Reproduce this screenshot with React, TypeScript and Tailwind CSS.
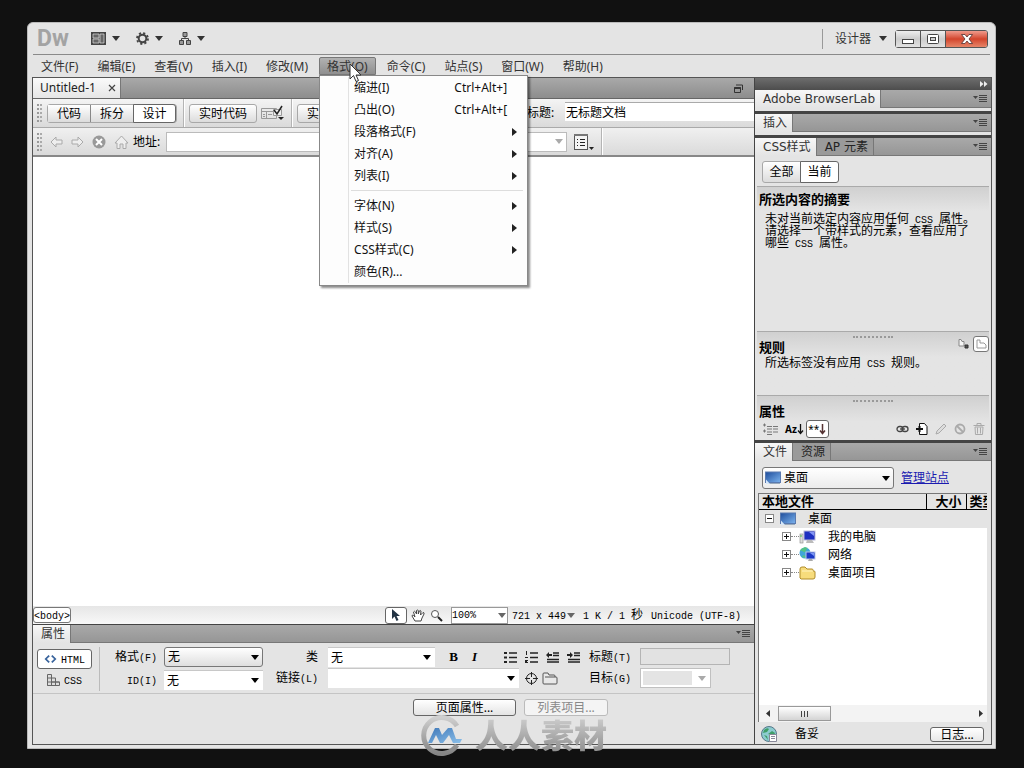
import { clsx } from "clsx";
import type { ReactNode } from "react";

const menus = [
  "文件(F)",
  "编辑(E)",
  "查看(V)",
  "插入(I)",
  "修改(M)",
  "格式(O)",
  "命令(C)",
  "站点(S)",
  "窗口(W)",
  "帮助(H)",
];

interface MenuEntry {
  label: string;
  shortcut?: string;
  submenu?: boolean;
}

const formatMenu: MenuEntry[][] = [
  [
    { label: "缩进(I)", shortcut: "Ctrl+Alt+]" },
    { label: "凸出(O)", shortcut: "Ctrl+Alt+[" },
    { label: "段落格式(F)", submenu: true },
    { label: "对齐(A)", submenu: true },
    { label: "列表(I)", submenu: true },
  ],
  [
    { label: "字体(N)", submenu: true },
    { label: "样式(S)", submenu: true },
    { label: "CSS样式(C)", submenu: true },
    { label: "颜色(R)..." },
  ],
];

const raised =
  "border border-[#a8a8a8] bg-linear-to-b from-white to-[#dcdcdc] text-black";

// Latin runs are set in a narrow mono face, the rest stays in the CJK font.
function Song({ children }: { children: string }) {
  return (
    <span className="whitespace-pre">
      {children
        .split(/([\x20-\x7e]+)/)
        .filter(Boolean)
        .map((part, i) =>
          /^[\x20-\x7e]/.test(part) ? (
            <span
              key={i}
              className="font-['Liberation_Mono','Noto_Sans_CJK_SC',monospace] text-[10px] leading-[0px]"
            >
              {part}
            </span>
          ) : (
            part
          ),
        )}
    </span>
  );
}

function Caret({ className }: { className?: string }) {
  return (
    <svg
      viewBox="0 0 8 5"
      className={clsx("pointer-events-none h-[5px] w-2 shrink-0 fill-current", className)}
      aria-hidden
    >
      <path d="M0 0h8L4 5z" />
    </svg>
  );
}

function Grip() {
  return (
    <span className="flex shrink-0 gap-px" aria-hidden>
      <span className="h-[18px] border-l-2 border-dotted border-[#999]" />
      <span className="h-[18px] border-l-2 border-dotted border-[#aaa]" />
    </span>
  );
}

function Separator() {
  return (
    <span
      className="h-full w-0.5 shrink-0 border-l border-[#b4b4b4] bg-white"
      aria-hidden
    />
  );
}

function Icon({
  label,
  className,
  children,
}: {
  label: string;
  className?: string;
  children: ReactNode;
}) {
  return (
    <button
      type="button"
      aria-label={label}
      className={clsx("flex shrink-0 items-center justify-center", className)}
    >
      {children}
    </button>
  );
}

function PanelBar({
  tabs,
  className,
}: {
  tabs: string[];
  className?: string;
}) {
  return (
    <div className={clsx("flex h-[18px] shrink-0 bg-[#e4e4e4]", className)}>
      {tabs.map((tab, i) => (
        <button
          key={tab}
          type="button"
          className={clsx(
            "h-[18px] border-r pr-[5px] pl-2 font-['DejaVu_Sans','Noto_Sans_CJK_SC',sans-serif] leading-[18px] whitespace-nowrap",
            i === 0
              ? "border-[#777] bg-linear-to-b from-[#f7f7f7] to-[#e4e4e4] text-[#333]"
              : "border-b border-[#777] bg-[#9a9a9a] text-[#222]",
          )}
        >
          {tab}
        </button>
      ))}
      <div className="flex flex-1 items-center justify-end border-b border-[#777] bg-linear-to-b from-[#a9a9a9] to-[#969696] pr-1">
        <Icon label="面板菜单">
          <svg width="14" height="9" viewBox="0 0 14 9" aria-hidden>
            <path d="M0 2h5L2.500 5z" fill="#444" />
            <path
              d="M6 1.500h8M6 3.500h8M6 5.500h8M6 7.500h8"
              stroke="#444"
              strokeWidth="1"
            />
          </svg>
        </Icon>
      </div>
    </div>
  );
}

function DesktopIcon() {
  return (
    <svg width="16" height="14" viewBox="0 0 16 14" className="shrink-0" aria-hidden>
      <defs>
        <linearGradient id="desk" x1="0" y1="0" x2="1" y2="1">
          <stop offset="0" stopColor="#1e4d9c" />
          <stop offset="1" stopColor="#7db4ee" />
        </linearGradient>
      </defs>
      <rect x="0.500" y="1" width="15" height="10.500" fill="url(#desk)" stroke="#5a7ab0" />
      <path d="M1 12.500h14" stroke="#9ab" />
      <path d="M1 8.500l4 4.500H1z" fill="#d6e8fa" />
    </svg>
  );
}

function ComputerIcon() {
  return (
    <svg width="17" height="14" viewBox="0 0 17 14" className="shrink-0" aria-hidden>
      <rect x="1" y="4" width="3" height="9" fill="#ddd" stroke="#888" strokeWidth=".6" />
      <path d="M2 5v2" stroke="#4b4" />
      <rect x="5" y="1" width="11" height="9" fill="#1d2fc0" stroke="#b8b8d8" />
      <path d="M10 2h5v4z" fill="#8394f4" />
      <path d="M8 10h5l2 3H7z" fill="#bbb" />
    </svg>
  );
}

function NetworkIcon() {
  return (
    <svg width="17" height="15" viewBox="0 0 17 15" className="shrink-0" aria-hidden>
      <circle cx="6" cy="6" r="5.500" fill="#3fa6d8" />
      <path d="M1 4c3-1 3 2 5 1s1-4 3-4L6 0 2 2zM3 10c1-3 4-2 4 1z" fill="#54c285" />
      <rect x="7" y="5" width="9" height="7" fill="#1b39c6" stroke="#b9c6e6" />
      <path d="M11 6h4v3z" fill="#7d98f5" />
      <path d="M10 12h3l1 2H9z" fill="#aaa" />
    </svg>
  );
}

function FolderIcon() {
  return (
    <svg width="17" height="14" viewBox="0 0 17 14" className="shrink-0" aria-hidden>
      <path
        d="M1 12V3q0-2 2-2h3l2 2h5q1 0 1 1v1h1q1 0 1 1v5q0 2-2 2H2z"
        fill="#f7dc7c"
        stroke="#b08c2a"
      />
      <path d="M3 5h11" stroke="#fff3c0" />
    </svg>
  );
}

function TitleBar() {
  return (
    <header className="mx-[5px] flex h-[32px] shrink-0 items-center border-b border-[#8a8a8a] text-[#333]">
      <span className="w-[52px] pl-1 font-['Roboto',sans-serif] text-[23px] leading-[30px] font-bold text-[#a3a3a3]">
        Dw
      </span>
      <div className="flex flex-1 items-center gap-4 pl-1.5">
        <Icon label="布局" className="gap-1.5">
          <svg width="15" height="13" viewBox="0 0 15 13" aria-hidden>
            <path d="M0 0h15v13H0z" fill="#444" />
            <path d="M2 2h6v4H2zM2 7h6v4H2zM9 2h4v9H9z" fill="#666" stroke="#ddd" strokeWidth=".7" />
          </svg>
          <Caret />
        </Icon>
        <Icon label="扩展" className="gap-1.5">
          <svg width="13" height="13" viewBox="0 0 13 13" aria-hidden>
            <circle cx="6.500" cy="6.500" r="3.800" fill="none" stroke="#444" strokeWidth="2" />
            <circle
              cx="6.500"
              cy="6.500"
              r="5.500"
              fill="none"
              stroke="#444"
              strokeWidth="1.800"
              strokeDasharray="2.160 2.160"
            />
          </svg>
          <Caret />
        </Icon>
        <Icon label="站点" className="gap-1.5">
          <svg width="12" height="13" viewBox="0 0 12 13" fill="#999" stroke="#444" aria-hidden>
            <path d="M4 .5h4v4H4zM.5 8.500h4v4h-4zM7.500 8.500h4v4h-4z" />
            <path d="M6 5v2M2.500 8.500V6.500h7v2" fill="none" />
          </svg>
          <Caret />
        </Icon>
      </div>
      <div className="flex items-center gap-2">
        <span className="h-5 border-l border-[#999]" aria-hidden />
        <button type="button" className="flex items-center gap-2 pl-1 leading-5">
          设计器
          <Caret />
        </button>
        <div className="mr-0.5 flex h-[18px] rounded-[3px] border border-[#555]">
          <Icon
            label="最小化"
            className="w-[25px] border-r border-[#555] bg-linear-to-b from-[#eee] via-[#ccc] to-[#e2e2e2]"
          >
            <svg width="12" height="12" viewBox="0 0 12 12" aria-hidden>
              <rect x=".5" y="6.500" width="11" height="4" fill="#fff" stroke="#444" />
            </svg>
          </Icon>
          <Icon
            label="最大化"
            className="w-[25px] border-r border-[#555] bg-linear-to-b from-[#eee] via-[#ccc] to-[#e2e2e2]"
          >
            <svg width="12" height="10" viewBox="0 0 12 10" aria-hidden>
              <rect x=".5" y=".5" width="11" height="9" rx="1" fill="#fff" stroke="#444" />
              <rect x="3.500" y="3.500" width="5" height="3" fill="#ccc" stroke="#444" />
            </svg>
          </Icon>
          <Icon
            label="关闭"
            className="w-[41px] rounded-r-[2px] bg-linear-to-b from-[#ef9a8c] via-[#d2442c] to-[#e68468]"
          >
            <svg width="12" height="10" viewBox="0 0 12 10" aria-hidden>
              <path
                d="M.5.500h3.500l2 2.500L8 .500h3.500L8 5l3.500 4.500H8L6 7 4 9.500H.500L4 5z"
                fill="#fff"
                stroke="#503030"
                strokeWidth=".8"
              />
            </svg>
          </Icon>
        </div>
      </div>
    </header>
  );
}

function FormatMenu() {
  return (
    <div
      role="menu"
      className="absolute top-full left-0 z-20 w-[209px] border border-[#888] bg-[#fdfdfd] pt-px pb-0.5 text-[#111] shadow-[2px_2px_2px_rgba(0,0,0,0.45)]"
    >
      {formatMenu.map((group, i) => (
        <div
          key={i}
          className={clsx("ml-7 border-l border-[#e2e2e2]", i > 0 && "pt-[3px]")}
        >
          {i > 0 && <hr className="mr-1 mb-1 ml-0.5 border-[#ddd]" />}
          {group.map((entry) => (
            <button
              key={entry.label}
              type="button"
              role="menuitem"
              className="flex h-[22px] w-full items-center pr-2.5 pl-[5px] text-left"
            >
              <span className="flex-1">{entry.label}</span>
              {entry.shortcut && <span className="pr-2.5">{entry.shortcut}</span>}
              {entry.submenu && (
                <svg width="5" height="8" viewBox="0 0 5 8" aria-hidden>
                  <path d="M0 0v8l5-4z" fill="#222" />
                </svg>
              )}
            </button>
          ))}
        </div>
      ))}
    </div>
  );
}

function MenuBar() {
  return (
    <nav className="mx-[5px] flex h-[22px] shrink-0 items-start gap-[3px] pt-0.5 text-[#333]">
      {menus.map((label) => {
        const open = label === "格式(O)";
        return (
          <div key={label} className="relative">
            <button
              type="button"
              className={clsx(
                "h-[18px] border px-[7px] leading-[17px] whitespace-nowrap",
                open
                  ? "rounded-t-[2px] border-[#777] bg-linear-to-b from-[#b2b2b2] to-[#8f8f8f]"
                  : "border-transparent",
              )}
            >
              {label}
            </button>
            {open && (
              <>
                <FormatMenu />
                <svg
                  width="14"
                  height="20"
                  viewBox="0 0 14 20"
                  className="absolute top-1.5 left-[30px] z-30"
                  aria-hidden
                >
                  <path
                    d="M1 1v15l3.500-3.500L7 18.500l2.500-1L7 12h5z"
                    fill="#fff"
                    stroke="#333"
                  />
                </svg>
              </>
            )}
          </div>
        );
      })}
    </nav>
  );
}

function DocumentArea() {
  return (
    <section className="flex min-h-0 flex-1 flex-col">
      <div className="flex h-[21px] shrink-0 items-stretch border-b border-[#666] bg-linear-to-b from-[#a9a9a9] to-[#8d8d8d]">
        <div className="flex items-center gap-3 border-r border-[#777] bg-linear-to-b from-[#fafafa] to-[#e6e6e6] pr-1 pl-[7px]">
          <span className="text-[#222]">Untitled-1</span>
          <Icon label="关闭文档">
            <svg width="8" height="8" viewBox="0 0 8 8" aria-hidden>
              <path d="M1 1l6 6M7 1L1 7" stroke="#444" strokeWidth="1.200" />
            </svg>
          </Icon>
        </div>
        <div className="flex flex-1 items-center justify-end pr-[11px]">
          <Icon label="还原">
            <svg width="9" height="9" viewBox="0 0 9 9" fill="none" stroke="#333" aria-hidden>
              <path d="M2 1h6.500v5M.5 3.500h6v5h-6z" />
              <path d="M.5 4h6" strokeWidth="2" />
            </svg>
          </Icon>
        </div>
      </div>

      <div className="flex h-[29px] shrink-0 items-center border-b border-[#aaa] bg-linear-to-b from-[#f4f4f4] to-[#dadada] pl-1 text-black">
        <Grip />
        <div className="ml-[5px] flex h-[19px] rounded-[3px] border border-[#a8a8a8] leading-[17px]">
          <button
            type="button"
            className="w-[43px] border-r border-[#888] bg-linear-to-b from-white to-[#dcdcdc]"
          >
            代码
          </button>
          <button type="button" className="w-[42px] bg-linear-to-b from-white to-[#dcdcdc]">
            拆分
          </button>
          <button
            type="button"
            className="-my-px w-[43px] rounded-r-[3px] border border-[#666] bg-white"
          >
            设计
          </button>
        </div>
        <span className="ml-1.5 flex h-full">
          <Separator />
        </span>
        <button type="button" className={clsx(raised, "ml-1 h-[19px] w-[68px] rounded-[3px] leading-[17px]")}>
          实时代码
        </button>
        <Icon label="检查浏览器兼容性" className="ml-1">
          <svg width="24" height="16" viewBox="0 0 24 16" fill="none" stroke="#666" aria-hidden>
            <path d="M.5 3.500h15v10H.5zM.5 6.500h15M5.500 6.500v7" stroke="#999" />
            <path d="M2 9.500h2M2 11.500h2M7 9.500h4" stroke="#999" />
            <path d="M12.500 4.500h8v6h-8z" fill="#eee" stroke="#999" />
            <path d="M13 5l3 4 5-8" stroke="#222" strokeWidth="1.500" />
            <path d="M17 12h6l-3 3z" fill="#222" stroke="none" />
          </svg>
        </Icon>
        <span className="ml-1.5 flex h-full">
          <Separator />
        </span>
        <button type="button" className={clsx(raised, "ml-1 h-[19px] w-[68px] rounded-[3px] leading-[17px]")}>
          实时视图
        </button>
        <label htmlFor="doc-title" className="ml-[162px] w-[38px] shrink-0">
          标题:
        </label>
        <input
          id="doc-title"
          defaultValue="无标题文档"
          className="mb-1 h-[19px] min-w-0 flex-1 border-t border-[#aaa] bg-white px-px"
        />
      </div>

      <div className="flex h-[29px] shrink-0 items-center border-b-2 border-[#888] bg-linear-to-b from-[#f0f0f0] to-[#dadada] pl-1 text-black">
        <Grip />
        <div className="ml-2 flex items-center gap-2 text-[#aaa]">
          <Icon label="后退">
            <svg width="13" height="12" viewBox="0 0 13 12" fill="#eee" stroke="#aaa" aria-hidden>
              <path d="M1 6l5-5v3h6v4H6v3z" />
            </svg>
          </Icon>
          <Icon label="前进">
            <svg width="13" height="12" viewBox="0 0 13 12" fill="#eee" stroke="#aaa" aria-hidden>
              <path d="M12 6L7 1v3H1v4h6v3z" />
            </svg>
          </Icon>
          <Icon label="停止">
            <svg width="14" height="14" viewBox="0 0 14 14" aria-hidden>
              <circle cx="7" cy="7" r="6.500" fill="#999" />
              <path d="M4 4l6 6M10 4l-6 6" stroke="#fff" strokeWidth="2" />
            </svg>
          </Icon>
          <Icon label="主页">
            <svg width="15" height="14" viewBox="0 0 15 14" fill="#eee" stroke="#aaa" aria-hidden>
              <path d="M1 8l6.500-7L14 8h-2v5.500H9V9H6v4.500H3V8z" />
            </svg>
          </Icon>
        </div>
        <label htmlFor="address" className="ml-1 w-[33px] shrink-0 whitespace-nowrap">
          地址:
        </label>
        <div className="relative flex w-[401px] items-center">
          <input
            id="address"
            className="h-5 w-full border border-[#bbb] bg-white px-1"
          />
          <Caret className="absolute right-1 text-[#aaa]" />
        </div>
        <Icon label="查看选项" className="ml-1.5 items-end">
          <svg width="22" height="18" viewBox="0 0 22 18" aria-hidden>
            <rect x="1.500" y="1.500" width="13" height="15" fill="#f4f4f4" stroke="#555" />
            <path d="M1 2h14" stroke="#777" strokeWidth="2" />
            <path d="M4 6.500h1M4 9.500h1M4 12.500h1M7 6.500h5M7 9.500h5M7 12.500h5" stroke="#222" />
            <path d="M16 14h5l-2.500 3z" fill="#222" />
          </svg>
        </Icon>
        <span className="ml-1.5 flex h-full">
          <Separator />
        </span>
      </div>

      <div className="flex-1 bg-white" />

      <div className="flex h-[18px] shrink-0 items-center bg-linear-to-b from-[#e6e6e6] to-[#f8f8f8] text-black">
        <button
          type="button"
          className="flex h-4 items-center rounded-[3px] border border-[#777] bg-white"
        >
          <Song>{"<body>"}</Song>
        </button>
        <div className="ml-auto flex h-full items-center">
          <Icon label="选取工具" className="h-[17px] w-[22px] rounded-[3px] border border-[#666] bg-white">
            <svg width="9" height="13" viewBox="0 0 9 13" aria-hidden>
              <path d="M1 0v10l2.500-2.500L5.500 12l2-1-2-4H9z" fill="#234" />
            </svg>
          </Icon>
          <Icon label="手形工具" className="ml-1">
            <svg width="14" height="13" viewBox="0 0 14 13" fill="#fff" stroke="#444" aria-hidden>
              <path d="M4 12L1 7q0-1.500 1.500-.5L4 8 2.500 3q1-1.500 2 0L5.500 5V1.500q1-1 1.800 0V5l1-3q1-1 1.700 0L9.500 6 12 3.500q1.500 0 1 1.500L11 9l-1 3z" />
            </svg>
          </Icon>
          <Icon label="缩放工具" className="ml-[5px]">
            <svg width="13" height="13" viewBox="0 0 13 13" fill="#fff" stroke="#555" aria-hidden>
              <circle cx="5" cy="5" r="3.500" />
              <path d="M8 8l4 4" stroke="#222" strokeWidth="2" />
            </svg>
          </Icon>
          <div className="relative ml-2 flex items-center">
            <select
              aria-label="缩放比率"
              className="h-[17px] w-[57px] appearance-none border border-[#999] bg-white font-['Liberation_Mono',monospace] text-[10px]"
            >
              <option>100%</option>
            </select>
            <Caret className="absolute right-0.5 text-[#666]" />
          </div>
          <button type="button" className="ml-1 flex items-center">
            <Song>721 x 449</Song>
            <Caret className="ml-px text-[#666]" />
          </button>
          <span className="ml-2">
            <Song>1 K / 1 秒</Song>
          </span>
          <span className="mr-[13px] ml-2">
            <Song>Unicode (UTF-8)</Song>
          </span>
        </div>
      </div>
    </section>
  );
}

function Select({
  id,
  value,
  className,
  boxed,
}: {
  id: string;
  value?: string;
  className: string;
  boxed?: boolean;
}) {
  return (
    <div className={clsx("relative flex items-center text-black", className)}>
      <select
        id={id}
        className={clsx(
          "h-5 w-full appearance-none pl-[3px]",
          boxed
            ? "rounded-[3px] border border-[#777] bg-linear-to-b from-white to-[#dedede]"
            : "border-t border-[#c8c8c8] bg-white",
        )}
      >
        <option>{value}</option>
      </select>
      <Caret className="absolute right-1" />
    </div>
  );
}

const listIcons = [
  { label: "项目列表", path: "M5 2h8M5 6.500h8M5 11h8", marks: "M0 1h3v2H0zM0 5.500h3v2H0zM0 10h3v2H0z" },
  { label: "编号列表", path: "M5 2h8M5 6.500h8M5 11h8", marks: "M1 0h1v4H1zM0 6h3v1H0zM0 9h3v1H2v1h1v1H0z" },
  { label: "删除内缩区块", path: "M7 2h6M7 4.500h6M1 8.500h12M1 11h12", marks: "M0 4l3-3v2h3v2H3v2z" },
  { label: "内缩区块", path: "M7 2h6M7 4.500h6M1 8.500h12M1 11h12", marks: "M6 4L3 1v2H0v2h3v2z" },
];

function PropertyInspector() {
  return (
    <section className="shrink-0 border-t border-[#444] text-black">
      <PanelBar tabs={["属性"]} />
      <div className="flex h-[51px] items-start border-b border-[#c4c4c4] pt-1">
        <div className="ml-1 flex w-[63px] flex-col border-r border-[#bbb] pt-0.5">
          <button
            type="button"
            className="flex h-5 w-[55px] items-center gap-1 rounded-[3px] border border-[#666] bg-white px-1.5"
          >
            <svg width="15" height="10" viewBox="0 0 15 10" fill="none" stroke="#38639c" strokeWidth="2" aria-hidden>
              <path d="M6 1L2 5l4 4M9 1l4 4-4 4" />
            </svg>
            <Song>HTML</Song>
          </button>
          <button type="button" className="flex h-[22px] items-center gap-1 pl-2.5">
            <svg width="13" height="12" viewBox="0 0 13 12" fill="#ddd" stroke="#666" aria-hidden>
              <path d="M.5.500h4v11h-4zM.5 4h4M.5 8h12v3.500H.5M4.500 4h4v7.500M4.500 8h8" />
            </svg>
            <Song>CSS</Song>
          </button>
        </div>
        <div className="grid w-[163px] grid-cols-[57px_99px] items-center gap-x-[7px] gap-y-[3px] text-right">
          <label htmlFor="format">
            <Song>格式(F)</Song>
          </label>
          <Select id="format" value="无" className="w-full" boxed />
          <label htmlFor="ident">
            <Song>ID(I)</Song>
          </label>
          <Select id="ident" value="无" className="w-full" />
        </div>
        <div className="flex flex-col gap-px">
          <div className="flex items-center">
            <label htmlFor="class" className="w-[55px] text-right">
              类
            </label>
            <Select id="class" value="无" className="ml-2.5 w-[107px]" />
            <button
              type="button"
              className="ml-[13px] w-[11px] font-['Liberation_Serif',serif] text-[13px] leading-5 font-bold"
            >
              B
            </button>
            <button
              type="button"
              className="ml-2.5 w-[11px] font-['Liberation_Serif',serif] text-[13px] leading-5 font-bold italic"
            >
              I
            </button>
            <div className="ml-6 flex gap-2">
              {listIcons.map((icon) => (
                <Icon key={icon.label} label={icon.label}>
                  <svg width="13" height="12" viewBox="0 0 13 12" aria-hidden>
                    <path d={icon.path} stroke="#222" strokeWidth="1.300" />
                    <path d={icon.marks} fill="#222" />
                  </svg>
                </Icon>
              ))}
            </div>
          </div>
          <div className="flex items-center">
            <label htmlFor="link" className="w-[55px] text-right">
              <Song>链接(L)</Song>
            </label>
            <Select id="link" className="ml-2.5 w-[191px]" />
            <Icon label="指向文件" className="ml-1.5">
              <svg width="13" height="13" viewBox="0 0 13 13" fill="none" stroke="#222" aria-hidden>
                <circle cx="6.500" cy="6.500" r="5" />
                <path d="M6.500 0v5M6.500 8v5M0 6.500h5M8 6.500h5" />
              </svg>
            </Icon>
            <Icon label="浏览文件" className="ml-1">
              <svg width="16" height="13" viewBox="0 0 16 13" fill="#e8e8e8" stroke="#555" aria-hidden>
                <path d="M1 11V2q0-1 1-1h4l1 2h5q1 0 1 1v1h1q1 0 1 1v5q0 1-1 1H2q-1 0-1-1zM3 5h10" />
              </svg>
            </Icon>
          </div>
        </div>
        <div className="ml-[9px] grid grid-cols-[43px_90px] items-center gap-x-2 gap-y-[3px] pt-px">
          <label htmlFor="caption">
            <Song>标题(T)</Song>
          </label>
          <input
            id="caption"
            disabled
            className="h-[17px] w-full border border-[#b4b4b4] bg-[#e2e2e2]"
          />
          <label htmlFor="target">
            <Song>目标(G)</Song>
          </label>
          <div className="relative flex w-[71px] items-center border border-[#c0c0c0] bg-white p-0.5 pr-[18px]">
            <select id="target" disabled className="h-[14px] w-full appearance-none bg-[#e4e4e4]">
              <option></option>
            </select>
            <Caret className="absolute right-1 text-[#aaa]" />
          </div>
        </div>
      </div>
      <div className="flex h-[50px] items-start gap-2 pt-[5px] pl-[380px] leading-[15px]">
        <button
          type="button"
          className="h-[17px] w-[103px] rounded-[3px] border border-[#666] bg-linear-to-b from-white to-[#e4e4e4]"
        >
          页面属性...
        </button>
        <button
          type="button"
          disabled
          className="h-[17px] w-[84px] rounded-[3px] border border-[#bbb] bg-[#f4f4f4] text-[#888]"
        >
          列表项目...
        </button>
      </div>
    </section>
  );
}

function SectionGrip() {
  return (
    <span
      className="w-10 self-start justify-self-center border-t-2 border-dotted border-[#999]"
      aria-hidden
    />
  );
}

function CssPanel() {
  return (
    <>
      <PanelBar tabs={["CSS样式", "AP 元素"]} />
      <div className="h-[284px] shrink-0 px-0.5 text-black">
        <div className="flex h-[30px] pt-[5px] pl-[5px] leading-5">
          <button type="button" className={clsx(raised, "h-[22px] w-[39px] rounded-l-[3px]")}>
            全部
          </button>
          <button
            type="button"
            className="-ml-px h-[22px] w-[39px] rounded-r-[3px] border border-[#666] bg-white"
          >
            当前
          </button>
        </div>
        <section className="h-[145px] border-t border-[#aaa]">
          <h2 className="bg-linear-to-b from-[#d0d0d0] to-[#e4e4e4] pl-0.5 text-[13px] leading-[24px] font-bold">
            所选内容的摘要
          </h2>
          <p className="pt-0.5 pl-2 leading-[12px] [&>span]:block">
            <Song>未对当前选定内容应用任何 CSS 属性。</Song>
            <Song>请选择一个带样式的元素，查看应用了</Song>
            <Song>哪些 CSS 属性。</Song>
          </p>
        </section>
        <section className="h-[64px] border-t border-[#aaa] bg-linear-to-b from-[#d0d0d0] to-[#e4e4e4] to-40%">
          <div className="grid h-6 grid-cols-3 pt-1">
            <h2 className="pt-1 pl-0.5 text-[13px] leading-[14px] font-bold">规则</h2>
            <SectionGrip />
            <div className="-mt-1 flex items-center justify-end gap-1">
              <Icon label="显示有关所选属性的信息">
                <svg width="12" height="12" viewBox="0 0 12 12" fill="none" stroke="#888" aria-hidden>
                  <path d="M2 8V1.500h2l1 2h2V8z" fill="#f5f5f5" />
                  <path d="M8 7h3v3H8z" fill="#555" stroke="#333" />
                </svg>
              </Icon>
              <Icon label="显示所选标签的规则层叠" className="h-4 w-4 rounded-[3px] border border-[#777] bg-white">
                <svg width="11" height="10" viewBox="0 0 11 10" fill="none" stroke="#999" aria-hidden>
                  <path d="M1 9V1h3v3h4l2 2v3z" />
                </svg>
              </Icon>
            </div>
          </div>
          <p className="pl-2 leading-[14px]">
            <Song>所选标签没有应用 CSS 规则。</Song>
          </p>
        </section>
        <section className="h-[44px] border-t border-[#aaa] bg-linear-to-b from-[#d0d0d0] to-[#e4e4e4] to-60%">
          <div className="grid h-6 grid-cols-3 pt-1">
            <h2 className="pt-1 pl-0.5 text-[13px] leading-[14px] font-bold">属性</h2>
            <SectionGrip />
          </div>
          <div className="flex h-[18px] items-center pr-1 pl-1.5">
            <Icon label="显示类别视图">
              <svg width="16" height="12" viewBox="0 0 16 12" stroke="#777" aria-hidden>
                <path d="M0 2h3M1.500 .5v3M0 8h3M1.500 6.500v3M4 3.500h5M10 3.500h5M4 6h5M10 6h5M4 9h5M10 9h5M4 11.500h5" />
              </svg>
            </Icon>
            <button
              type="button"
              aria-label="显示列表视图"
              className="ml-1.5 flex items-center text-[10px] leading-3 font-bold"
            >
              Az
              <svg width="7" height="11" viewBox="0 0 7 11" aria-hidden>
                <path d="M3.500 0v9M1 6.500l2.500 3 2.500-3" fill="none" stroke="#111" strokeWidth="1.300" />
              </svg>
            </button>
            <button
              type="button"
              aria-label="只显示设置属性"
              className="ml-0.5 flex h-[18px] w-[23px] items-center justify-center rounded-[3px] border border-[#666] bg-white text-[10px] leading-3"
            >
              **
              <svg width="7" height="11" viewBox="0 0 7 11" aria-hidden>
                <path d="M3.500 0v9M1 6.500l2.500 3 2.500-3" fill="none" stroke="#533" strokeWidth="1.500" />
              </svg>
            </button>
            <div className="ml-auto flex items-center gap-[7px]">
              <Icon label="附加样式表">
                <svg width="13" height="8" viewBox="0 0 13 8" fill="none" stroke="#444" strokeWidth="1.300" aria-hidden>
                  <rect x="1" y="1.500" width="6" height="5" rx="2.500" />
                  <rect x="6" y="1.500" width="6" height="5" rx="2.500" />
                  <path d="M4 4h5" />
                </svg>
              </Icon>
              <Icon label="新建规则">
                <svg width="12" height="12" viewBox="0 0 12 12" fill="#fff" stroke="#111" aria-hidden>
                  <path d="M3.500.5h5l2.500 3v8H3.500z" />
                  <path d="M0 6h7M3.500 3v6" strokeWidth="2" />
                </svg>
              </Icon>
              <Icon label="编辑规则">
                <svg width="12" height="12" viewBox="0 0 12 12" fill="#ddd" stroke="#aaa" aria-hidden>
                  <path d="M1 11l1-3 7-7 2 2-7 7z" />
                </svg>
              </Icon>
              <Icon label="禁用属性">
                <svg width="12" height="12" viewBox="0 0 12 12" fill="none" stroke="#aaa" strokeWidth="1.800" aria-hidden>
                  <circle cx="6" cy="6" r="4.500" />
                  <path d="M3 3l6 6" />
                </svg>
              </Icon>
              <Icon label="删除规则">
                <svg width="12" height="12" viewBox="0 0 12 12" fill="none" stroke="#aaa" aria-hidden>
                  <path d="M.5 2.500h11M4 2V.500h4V2M2 4l.5 7.500h7L10 4zM4.500 4.500v6M7.500 4.500v6" />
                </svg>
              </Icon>
            </div>
          </div>
        </section>
      </div>
    </>
  );
}

function Toggle({ open }: { open?: boolean }) {
  return (
    <svg width="9" height="9" viewBox="0 0 9 9" className="shrink-0" aria-hidden>
      <rect x=".5" y=".5" width="8" height="8" fill="#fff" stroke="#888" />
      <path d={open ? "M2 4.500h5" : "M2 4.500h5M4.500 2v5"} stroke="#111" />
    </svg>
  );
}

const files = [
  { name: "我的电脑", icon: <ComputerIcon /> },
  { name: "网络", icon: <NetworkIcon /> },
  { name: "桌面项目", icon: <FolderIcon /> },
];

function FilesPanel() {
  return (
    <>
      <PanelBar tabs={["文件", "资源"]} />
      <div className="flex min-h-0 flex-1 flex-col px-[3px] text-black">
        <div className="flex h-8 shrink-0 items-center pt-0.5 pl-1">
          <div className="relative flex w-[132px] items-center">
            <select
              aria-label="站点"
              className="h-[22px] w-full appearance-none rounded-[3px] border border-[#777] bg-linear-to-b from-white to-[#ececec] pl-[21px]"
            >
              <option>桌面</option>
            </select>
            <span className="pointer-events-none absolute left-[3px]">
              <DesktopIcon />
            </span>
            <Caret className="absolute right-1" />
          </div>
          <a href="#sites" className="ml-[7px] text-[#1a1ab0] underline">
            管理站点
          </a>
        </div>
        <div className="mr-px flex min-h-0 flex-1 flex-col overflow-hidden border-t border-l border-[#777] bg-white">
          <table className="w-[259px] table-fixed border-collapse">
            <thead className="bg-[#e4e4e4]">
              <tr className="h-[15px] border-b border-black text-left text-[13px] leading-[14px]">
                <th className="w-[167px] border-r border-black pl-[3px]">本地文件</th>
                <th className="w-10 border-r border-black pr-1 text-right">大小</th>
                <th className="pl-[3px]">类型</th>
              </tr>
            </thead>
            <tbody>
              <tr className="bg-[#e4e4e4]">
                <td colSpan={3}>
                  <div className="flex h-[18px] items-center pl-1.5">
                    <Toggle open />
                    <span className="ml-1.5 flex">
                      <DesktopIcon />
                    </span>
                    <span className="ml-3">桌面</span>
                  </div>
                </td>
              </tr>
              {files.map((file) => (
                <tr key={file.name}>
                  <td colSpan={3}>
                    <div className="flex h-[18px] items-center pl-[23px]">
                      <Toggle />
                      <span className="w-2 border-t border-dotted border-[#888]" />
                      {file.icon}
                      <span className="ml-3">{file.name}</span>
                    </div>
                  </td>
                </tr>
              ))}
            </tbody>
          </table>
          <div className="mt-auto flex h-[17px] shrink-0 items-center bg-[#f3f3f3] pr-1 pl-[7px]" aria-hidden>
            <svg width="4" height="7" viewBox="0 0 4 7">
              <path d="M4 0v7L0 3.500z" fill="#333" />
            </svg>
            <span className="ml-2 flex h-[15px] w-[53px] items-center justify-center gap-0.5 border border-[#999] bg-linear-to-b from-white to-[#d4d4d4]">
              <span className="h-1.5 w-px bg-[#444]" />
              <span className="h-1.5 w-px bg-[#444]" />
              <span className="h-1.5 w-px bg-[#444]" />
            </span>
            <svg width="4" height="7" viewBox="0 0 4 7" className="ml-auto">
              <path d="M0 0v7l4-3.500z" fill="#333" />
            </svg>
          </div>
        </div>
        <div className="flex h-[22px] shrink-0 items-center pt-0.5 pr-1 pl-[3px]">
          <svg width="17" height="17" viewBox="0 0 17 17" aria-hidden>
            <circle cx="8" cy="8" r="7.500" fill="#8ccbd0" stroke="#578" />
            <path d="M3 4q3-3 5-1l-2 3-4 1zM7 8l4-3 3 2-1 3zM3 9l3 1 1 4z" fill="#3f9e68" />
            <path d="M8.500 8.500h7v7h-7z" fill="#fff" stroke="#889" />
            <path d="M10 10.500h4M10 12.500h4" stroke="#889" />
          </svg>
          <span className="ml-[17px]">备妥</span>
          <button
            type="button"
            className="ml-auto h-[15px] w-[54px] rounded-[3px] border border-[#666] bg-linear-to-b from-white to-[#e8e8e8] leading-[13px]"
          >
            日志...
          </button>
        </div>
      </div>
    </>
  );
}

function Watermark() {
  return (
    <div
      className="pointer-events-none absolute top-[691px] left-[392px] z-10 flex items-center gap-3"
      aria-hidden
    >
      <svg width="43" height="43" viewBox="0 0 43 43" fill="none">
        <defs>
          <linearGradient id="ring" x1="0" y1="0" x2="0" y2="1">
            <stop offset="0" stopColor="#cfcfcf" />
            <stop offset="1" stopColor="#858585" />
          </linearGradient>
          <linearGradient id="wave" x1="0" y1="0" x2="1" y2="1">
            <stop offset="0" stopColor="#3f78b8" />
            <stop offset="1" stopColor="#8cc0ea" />
          </linearGradient>
        </defs>
        <path d="M37 12A18 18 0 1 0 37 31" stroke="url(#ring)" strokeWidth="5" />
        <path
          d="M8 29l7-15h4l3 7 6-7h4l4 11h6l-2 4h-7l-4-8-6 8h-3l-4-8-4 8z"
          fill="url(#wave)"
        />
      </svg>
      <span className="bg-linear-to-b from-[#d0d0d0] to-[#888] bg-clip-text text-[33px] leading-10 font-black text-transparent">
        人人素材
      </span>
    </div>
  );
}

export default function App() {
  return (
    <div className="flex min-h-screen bg-[#111] pt-[22px] pr-7 pb-[19px] pl-[27px] font-['Noto_Sans','Noto_Sans_CJK_SC',sans-serif] text-[12px] leading-4">
      <main className="relative flex min-w-0 flex-1 flex-col rounded-t-md border border-[#bbb] bg-[#e4e4e4]">
        <TitleBar />
        <MenuBar />
        <div className="mr-[3px] mb-[3px] ml-1 flex flex-1 border border-[#555]">
          <div className="flex min-w-0 flex-1 flex-col">
            <DocumentArea />
            <PropertyInspector />
          </div>
          <aside className="flex w-[237px] shrink-0 flex-col border-l border-[#444]">
            <div className="flex h-3 shrink-0 items-center justify-end bg-linear-to-b from-[#6d6d6d] to-[#4d4d4d] pr-[3px]">
              <Icon label="折叠面板">
                <svg width="8" height="6" viewBox="0 0 8 6" fill="#eee" aria-hidden>
                  <path d="M0 0v6l3.500-3zM4 0v6l3.500-3z" />
                </svg>
              </Icon>
            </div>
            <div className="h-6 shrink-0 border-b-[3px] border-[#444] bg-[#e4e4e4]">
              <PanelBar tabs={["Adobe BrowserLab"]} />
            </div>
            <div className="h-6 shrink-0 border-b-[3px] border-[#444] bg-[#e4e4e4]">
              <PanelBar tabs={["插入"]} />
            </div>
            <CssPanel />
            <div className="h-[3px] shrink-0 bg-[#444]" />
            <FilesPanel />
          </aside>
        </div>
        <Watermark />
      </main>
    </div>
  );
}
